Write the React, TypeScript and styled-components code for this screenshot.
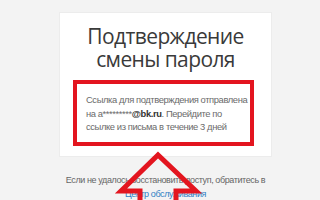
import React from "react";
import styled, { createGlobalStyle } from "styled-components";

const Global = createGlobalStyle`
  html, body { margin: 0; padding: 0; }
  body {
    background: #f3f3f3;
    width: 320px;
    height: 200px;
    overflow: hidden;
    font-family: "Liberation Sans", Arial, sans-serif;
  }
`;

const Page = styled.div`
  position: relative;
  width: 320px;
  height: 200px;
  overflow: hidden;
  padding: 12px 0 0 59px;
  box-sizing: border-box;
`;

const Card = styled.div`
  width: 213px;
  box-sizing: border-box;
  background: #ffffff;
  border: 1px solid #ececec;
  padding: 12px 17px 10px 13px;
`;

const Title = styled.h1`
  margin: 0 0 9px;
  font-family: "Open Sans", "Noto Sans", sans-serif;
  font-weight: 400;
  font-size: 21px;
  letter-spacing: -0.6px;
  line-height: 23px;
  color: #3a3a3a;
  text-align: center;
  padding-left: 4px;
`;

const Notice = styled.div`
  border: 4px solid #e3151f;
  padding: 9px 0 8px 9px;
`;

const NoticeText = styled.p`
  margin: 0;
  font-size: 9.4px;
  letter-spacing: -0.4px;
  line-height: 13.5px;
  color: #6b6b6b;
  white-space: nowrap;
`;

const Email = styled.b`
  color: #333;
  font-weight: 700;
`;

const Help = styled.p`
  margin: 16px 0 0 -20px;
  width: 253px;
  text-align: center;
  font-size: 9px;
  letter-spacing: -0.4px;
  line-height: 14.5px;
  color: #666;
  white-space: nowrap;
`;

const Link = styled.a`
  color: #2f7fc4;
  text-decoration: none;
`;

const Arrow = styled.svg`
  position: absolute;
  left: 113px;
  top: 148px;
  width: 92px;
  height: 60px;
  pointer-events: none;
`;

export default function App() {
  return (
    <>
      <Global />
      <Page>
        <Card>
          <Title>
            Подтверждение
            <br />
            смены пароля
          </Title>
          <Notice>
            <NoticeText>
              Ссылка для подтверждения отправлена
              <br />
              на a*********<Email>@bk.ru</Email>. Перейдите по
              <br />
              ссылке из письма в течение 3 дней
            </NoticeText>
          </Notice>
        </Card>
        <Help>
          Если не удалось восстановить доступ, обратитесь в
          <br />
          <Link href="#">Центр обслуживания</Link>
        </Help>
        <Arrow viewBox="0 0 92 60">
          <path
            d="M27 60 L27 43 L8 43 L45 7 L83 43 L63 43 L63 60"
            fill="none"
            stroke="#e3151f"
            strokeWidth="5"
            strokeLinejoin="miter"
          />
        </Arrow>
      </Page>
    </>
  );
}
